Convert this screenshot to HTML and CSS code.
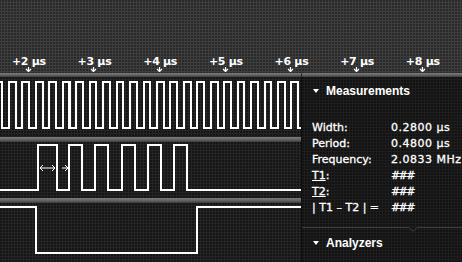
FILE: index.html
```html
<!DOCTYPE html>
<html>
<head>
<meta charset="utf-8">
<link rel="stylesheet" href="styles.css">
</head>
<body>
<div class="app">
  <header class="ruler">
    <div class="tick"><span class="tick-label">+2 µs</span><svg class="tick-arrow" width="7" height="5" viewBox="0 0 7 5"><path d="M3.5 0V4.5M1 2L3.5 4.5L6 2"/></svg></div>
    <div class="tick"><span class="tick-label">+3 µs</span><svg class="tick-arrow" width="7" height="5" viewBox="0 0 7 5"><path d="M3.5 0V4.5M1 2L3.5 4.5L6 2"/></svg></div>
    <div class="tick"><span class="tick-label">+4 µs</span><svg class="tick-arrow" width="7" height="5" viewBox="0 0 7 5"><path d="M3.5 0V4.5M1 2L3.5 4.5L6 2"/></svg></div>
    <div class="tick"><span class="tick-label">+5 µs</span><svg class="tick-arrow" width="7" height="5" viewBox="0 0 7 5"><path d="M3.5 0V4.5M1 2L3.5 4.5L6 2"/></svg></div>
    <div class="tick"><span class="tick-label">+6 µs</span><svg class="tick-arrow" width="7" height="5" viewBox="0 0 7 5"><path d="M3.5 0V4.5M1 2L3.5 4.5L6 2"/></svg></div>
    <div class="tick"><span class="tick-label">+7 µs</span><svg class="tick-arrow" width="7" height="5" viewBox="0 0 7 5"><path d="M3.5 0V4.5M1 2L3.5 4.5L6 2"/></svg></div>
    <div class="tick"><span class="tick-label">+8 µs</span><svg class="tick-arrow" width="7" height="5" viewBox="0 0 7 5"><path d="M3.5 0V4.5M1 2L3.5 4.5L6 2"/></svg></div>
  </header>
  <div class="bar top-bar"></div>
  <div class="main">
    <div class="traces">
      <div class="trace trace-1">
        <svg class="wave" width="301" height="60" viewBox="0 0 301 60">
          <path d="M0 5H2V51H9V5H16V51H22V5H29V51H36V5H43V51H49V5H56V51H63V5H70V51H76V5H83V51H90V5H96V51H103V5H110V51H117V5H123V51H130V5H137V51H144V5H150V51H157V5H164V51H170V5H177V51H184V5H191V51H197V5H204V51H211V5H218V51H224V5H231V51H238V5H244V51H251V5H258V51H265V5H271V51H278V5H285V51H291V5H298V51H301"/>
          <rect class="glitch" x="68" y="4" width="3" height="48"/>
        </svg>
      </div>
      <div class="bar"></div>
      <div class="trace trace-2">
        <svg class="wave" width="301" height="56" viewBox="0 0 301 56">
          <path d="M0 48H38V3H57V48H69V3H82V48H95V3H108V48H122V3H135V48H148V3H161V48H174V3H187V48H301"/>
          <path class="measure" d="M40 26H55M43 23L40 26L43 29M52 23L55 26L52 29M62 26H68M65 23L68 26L65 29"/>
        </svg>
      </div>
      <div class="bar"></div>
      <div class="trace trace-3">
        <svg class="wave" width="301" height="59" viewBox="0 0 301 59">
          <path d="M0 4H36V50H197V4H301"/>
        </svg>
      </div>
    </div>
    <aside class="panel">
      <div class="section-head"><span class="disclosure"></span>Measurements</div>
      <div class="measures">
        <span class="m-label">Width:</span><span class="m-value">0.2800 µs</span>
        <span class="m-label">Period:</span><span class="m-value">0.4800 µs</span>
        <span class="m-label">Frequency:</span><span class="m-value">2.0833 MHz</span>
        <span class="m-label"><span class="link">T1</span>:</span><span class="m-value hash">###</span>
        <span class="m-label"><span class="link">T2</span>:</span><span class="m-value hash">###</span>
        <span class="m-label">| T1 – T2 | =</span><span class="m-value hash">###</span>
      </div>
      <svg class="divider" width="160" height="6" viewBox="0 0 160 6"><path d="M0 0.5H107L111 4.5L115 0.5H160"/></svg>
      <div class="section-head analyzers"><span class="disclosure"></span>Analyzers</div>
    </aside>
  </div>
</div>
</body>
</html>
```

FILE: styles.css
```css
html, body {
  margin: 0;
  padding: 0;
  background: #1e1e1e;
}

.app {
  width: 462px;
  height: 262px;
  overflow: hidden;
  display: flex;
  flex-direction: column;
  font-family: "DejaVu Sans", "Liberation Sans", sans-serif;
  color: #fff;
}

.ruler {
  height: 72px;
  padding-bottom: 1px;
  display: flex;
  align-items: flex-end;
  margin-left: -4px;
  background-color: #3e3e3e;
  background-image: radial-gradient(circle at 1px 1px, rgba(0, 0, 0, 0.35) 0.7px, transparent 1.1px);
  background-size: 3px 3px;
}

.tick {
  width: 65.67px;
  flex: none;
  display: flex;
  flex-direction: column;
  align-items: center;
}

.tick-label {
  font-size: 11px;
  font-weight: bold;
  line-height: 12px;
  letter-spacing: -0.3px;
  white-space: nowrap;
}

.tick-arrow {
  display: block;
  margin-top: -1px;
  margin-left: -1px;
}

.tick-arrow path {
  fill: none;
  stroke: #fff;
  stroke-width: 1.2;
}

.bar {
  height: 4px;
  flex: none;
  background: linear-gradient(#7c7c7c, #636363 50%, #3c3c3c);
}

.top-bar {
  background:
    linear-gradient(to right, transparent 301px, #2a2a2a 301px, #2a2a2a 302px, transparent 302px),
    linear-gradient(#7c7c7c, #636363 50%, #3c3c3c);
}

.main {
  flex: 1;
  display: flex;
  min-height: 0;
}

.traces {
  width: 301px;
  flex: none;
  display: flex;
  flex-direction: column;
}

.traces .bar {
  height: 5px;
}

.trace {
  flex: none;
  background-color: #252525;
  background-image: radial-gradient(circle at 1px 1px, rgba(0, 0, 0, 0.45) 0.7px, transparent 1.1px);
  background-size: 3px 3px;
}

.trace-1 { height: 60px; }
.trace-2 { height: 56px; }
.trace-3 { height: 59px; }

.wave {
  display: block;
}

.wave path {
  fill: none;
  stroke: #fff;
  stroke-width: 2;
}

.wave .glitch {
  fill: #fff;
}

.wave .measure {
  stroke-width: 1;
}

.panel {
  flex: 1;
  border-left: 1px solid #0e0e0e;
  background-color: #1e1e1e;
  background-image: radial-gradient(circle at 1px 1px, rgba(0, 0, 0, 0.4) 0.7px, transparent 1.1px);
  background-size: 3px 3px;
  display: flex;
  flex-direction: column;
  font-size: 11px;
  line-height: 16px;
}

.section-head {
  margin-top: 6px;
  padding-left: 11px;
  display: flex;
  align-items: center;
  font-family: "Liberation Sans", "DejaVu Sans", sans-serif;
  font-size: 12px;
  font-weight: bold;
}

.disclosure {
  width: 0;
  height: 0;
  border-left: 3.5px solid transparent;
  border-right: 3.5px solid transparent;
  border-top: 4px solid #fff;
  margin-right: 7px;
}

.measures {
  margin-top: 21px;
  padding-left: 10px;
  display: grid;
  grid-template-columns: 79px auto;
  -webkit-text-stroke: 0.3px #fff;
}

.m-label {
  white-space: nowrap;
}

.m-value {
  letter-spacing: 0.5px;
  white-space: nowrap;
}

.m-value.hash {
  letter-spacing: -1.6px;
}

.link {
  text-decoration: underline;
}

.divider {
  display: block;
  margin-top: 11px;
}

.divider path {
  fill: none;
  stroke: #3e3e3e;
  stroke-width: 1;
}

.analyzers {
  margin-top: 2px;
}
```
